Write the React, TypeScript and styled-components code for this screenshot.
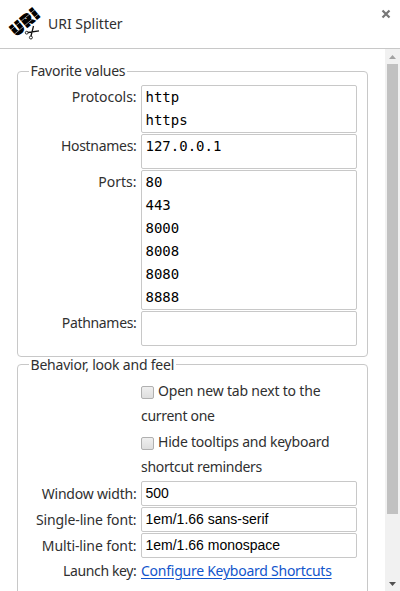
import React from "react";
import styled, { createGlobalStyle } from "styled-components";

const GlobalStyle = createGlobalStyle`
  * { box-sizing: border-box; }
  html, body { margin: 0; overflow: hidden; background: #fff; }
`;

const Dialog = styled.div`
  width: 400px;
  height: 591px;
  display: flex;
  flex-direction: column;
  overflow: hidden;
  background: #fff;
  color: #303030;
  font-family: "Noto Sans", sans-serif;
  font-size: 14px;
  line-height: 25px;
`;

const Header = styled.header`
  height: 49px;
  flex: none;
  display: flex;
  align-items: center;
  padding: 0 8px;
  border-bottom: 1px solid #c8c8c8;
`;

const LogoImage = styled.svg`
  width: 32px;
  height: 32px;
  flex: none;
  overflow: visible;
`;

const Title = styled.h1`
  flex: 1;
  margin: 0 0 2px 8px;
  font-size: 14px;
  font-weight: 400;
`;

const Label = styled.span<{ $track?: number }>`
  letter-spacing: ${(p) => p.$track ?? 0}px;
  white-space: nowrap;
`;

const CloseButton = styled.button`
  width: 10px;
  height: 10px;
  margin: 0 1px 20px 0;
  padding: 0;
  border: 0;
  background: none;
  display: flex;
`;

const Body = styled.div`
  flex: 1;
  min-height: 0;
  display: flex;
`;

const Content = styled.main`
  flex: 1;
  overflow: hidden;
  padding: 22px 17px 0;
`;

const Group = styled.section`
  height: 286px;
  margin-bottom: 7px;
  padding: 0 10px;
  border: 1px solid #c8c8c8;
  border-radius: 4px;
`;

const Legend = styled.h2<{ $lineHeight: number }>`
  width: fit-content;
  height: 14px;
  margin: -1px 0 0 1px;
  padding: 0 2px 0 1.5px;
  font-size: 14px;
  font-weight: 400;
  line-height: ${(p) => p.$lineHeight}px;
  background: linear-gradient(#fff, #fff) 0 0 / 100% 1px no-repeat;
`;

const Row = styled.div<{ $gap?: number }>`
  display: grid;
  grid-template-columns: 109px 216px;
  column-gap: 4px;
  margin-bottom: ${(p) => p.$gap ?? 1}px;
`;

const RowLabel = styled.div<{ $lineHeight?: number }>`
  padding-right: 0.5px;
  text-align: right;
  line-height: ${(p) => p.$lineHeight ?? 25}px;
`;

const ListBox = styled.div<{ $height: number }>`
  height: ${(p) => p.$height}px;
  padding: 0 3.5px;
  border: 1px solid #c8c8c8;
  border-radius: 2px;
  color: #000;
  font: 14px/23px "DejaVu Sans Mono", monospace;
  white-space: pre;
`;

const Field = styled.div`
  height: 25px;
  padding: 0 3.5px;
  border: 1px solid #c8c8c8;
  border-radius: 2px;
  color: #000;
  font: 14px/23px "Liberation Sans", sans-serif;
`;

const Options = styled.div`
  height: 103px;
  margin-left: 113px;
`;

const Option = styled.label`
  display: block;
  height: 51px;
`;

const OptionLine = styled.span`
  display: flex;
  align-items: center;
  height: 25px;
`;

const Box = styled.span`
  width: 13px;
  height: 13px;
  margin: 3px 4px 0 0;
  border: 1px solid #b0b0b0;
  border-radius: 2px;
  background: linear-gradient(#efefef, #dedede);
`;

const Link = styled.a`
  color: #1155cc;
  text-decoration: underline;
  text-underline-offset: 2px;
`;

const Scrollbar = styled.div`
  width: 15px;
  display: flex;
  flex-direction: column;
  align-items: center;
  background: #f1f1f1;
`;

const Arrow = styled.div`
  height: 15px;
  flex: none;
  display: flex;
  align-items: center;
`;

const Track = styled.div`
  flex: 1;
`;

const Thumb = styled.div`
  width: 11px;
  height: 450px;
  background: #c1c1c1;
`;

const Logo = () => (
  <LogoImage viewBox="0 0 32 32">
    <g transform="translate(8.4 28.4) rotate(-40)">
      <text x="0" y="0" fontFamily="Inter" fontWeight="900" fontSize="16" textLength="31" lengthAdjust="spacing" stroke="#000" strokeWidth="1.5">URI</text>
      <path d="M-1 -8.6H33M-1 -3H33" stroke="#fff" strokeWidth=".5" />
    </g>
    <path d="M18 24.3L31 22.5M23 30L25.3 17.5" fill="none" stroke="#fff" strokeWidth="3.2" />
    <g fill="none" stroke="#111">
      <path d="M20 24.5L31 22.8M23 28L25.5 18" strokeWidth="1.3" />
      <circle cx="18.7" cy="24.7" r="1.4" strokeWidth=".9" />
      <circle cx="22.9" cy="29.5" r="1.5" strokeWidth=".9" />
    </g>
  </LogoImage>
);

const lists = [
  { label: "Protocols:", value: "http\nhttps", height: 48, track: -0.05 },
  { label: "Hostnames:", value: "127.0.0.1", height: 35, track: -0.3 },
  { label: "Ports:", value: "80\n443\n8000\n8008\n8080\n8888", height: 140, track: 0 },
  { label: "Pathnames:", value: "", height: 35, track: -0.33 },
];

const fields = [
  { label: "Window width:", value: "500", track: -0.2, gap: 1 },
  { label: "Single-line font:", value: "1em/1.66 sans-serif", track: -0.13, gap: 1 },
  { label: "Multi-line font:", value: "1em/1.66 monospace", track: -0.1, gap: 0 },
];

const options = [
  { first: "Open new tab next to the", second: "current one", track: -0.19, track2: -0.3 },
  { first: "Hide tooltips and keyboard", second: "shortcut reminders", track: -0.23, track2: -0.31 },
];

export default function App() {
  return (
    <>
      <GlobalStyle />
      <Dialog>
        <Header>
          <Logo />
          <Title><Label>URI Splitter</Label></Title>
          <CloseButton aria-label="Close">
            <svg width="10" height="10" viewBox="0 0 10 10">
              <path d="M1.5 1.5L8.5 8.5M8.5 1.5L1.5 8.5" stroke="#777" strokeWidth="2.2" />
            </svg>
          </CloseButton>
        </Header>
        <Body>
          <Content>
            <Group>
              <Legend $lineHeight={0}><Label $track={-0.25}>Favorite values</Label></Legend>
              {lists.map((l) => (
                <Row key={l.label}>
                  <RowLabel $lineHeight={23}><Label $track={l.track}>{l.label}</Label></RowLabel>
                  <ListBox $height={l.height}>{l.value}</ListBox>
                </Row>
              ))}
            </Group>
            <Group>
              <Legend $lineHeight={1}><Label $track={-0.2}>Behavior, look and feel</Label></Legend>
              <Options>
                {options.map((o) => (
                  <Option key={o.first}>
                    <OptionLine><Box /><Label $track={o.track}>{o.first}</Label></OptionLine>
                    <OptionLine><Label $track={o.track2}>{o.second}</Label></OptionLine>
                  </Option>
                ))}
              </Options>
              {fields.map((f) => (
                <Row key={f.label} $gap={f.gap}>
                  <RowLabel><Label $track={f.track}>{f.label}</Label></RowLabel>
                  <Field>{f.value}</Field>
                </Row>
              ))}
              <Row>
                <RowLabel><Label $track={-0.36}>Launch key:</Label></RowLabel>
                <Link><Label $track={-0.25}>Configure Keyboard Shortcuts</Label></Link>
              </Row>
            </Group>
          </Content>
          <Scrollbar>
            <Arrow><svg width="7" height="4"><path d="M0 4L3.5 0L7 4Z" fill="#a3a3a3" /></svg></Arrow>
            <Track><Thumb /></Track>
            <Arrow><svg width="7" height="4"><path d="M0 0L3.5 4L7 0Z" fill="#505050" /></svg></Arrow>
          </Scrollbar>
        </Body>
      </Dialog>
    </>
  );
}
